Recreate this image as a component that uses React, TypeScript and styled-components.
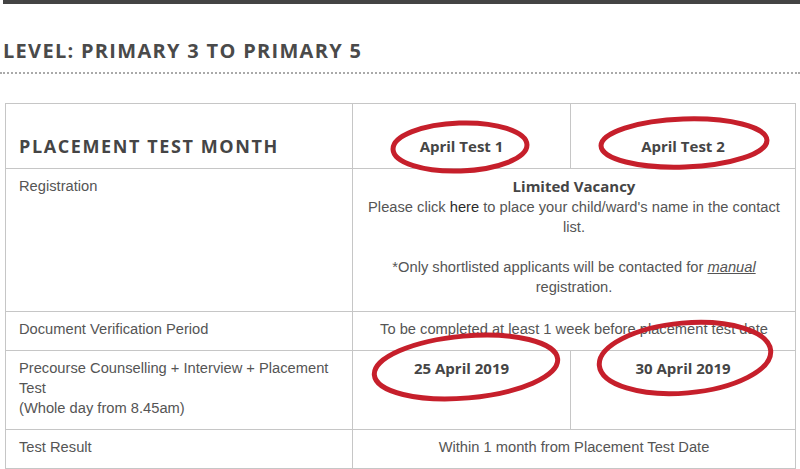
import styled, { createGlobalStyle } from "styled-components";

const GlobalStyle = createGlobalStyle`
  html, body {
    margin: 0;
    padding: 0;
    background: #fff;
  }
  body {
    font-family: "Liberation Sans", Arial, sans-serif;
    color: #555;
    overflow: hidden;
  }
`;

const marks = [
  { cx: 460, cy: 147, rx: 67, ry: 24, tilt: -2 },
  { cx: 684, cy: 143, rx: 83, ry: 24, tilt: -2 },
  { cx: 466, cy: 367, rx: 92, ry: 31, tilt: -5 },
  { cx: 685, cy: 358, rx: 86, ry: 35, tilt: -5 },
];

const App = () => {
  return (
    <Page>
      <GlobalStyle />
      <TopBar />
      <Heading>Level: Primary 3 to Primary 5</Heading>
      <Divider />
      <Schedule>
        <colgroup>
          <col style={{ width: 347 }} />
          <col style={{ width: 218 }} />
          <col style={{ width: 225 }} />
        </colgroup>
        <tbody>
          <HeadRow>
            <HeadCell>Placement Test Month</HeadCell>
            <MonthCell>April Test 1</MonthCell>
            <MonthCell>April Test 2</MonthCell>
          </HeadRow>
          <tr>
            <Cell $tall>Registration</Cell>
            <Cell $center $tall colSpan={2}>
              <Strong>Limited Vacancy</Strong>
              <br />
              Please click <Link>here</Link> to place your child/ward's name in
              the contact list.
              <br />
              <br />
              *Only shortlisted applicants will be contacted for{" "}
              <Note>manual</Note> registration.
            </Cell>
          </tr>
          <tr>
            <Cell>Document Verification Period</Cell>
            <Cell $center colSpan={2}>
              To be completed at least 1 week before placement test date
            </Cell>
          </tr>
          <tr>
            <Cell>
              Precourse Counselling + Interview + Placement Test
              <br />
              (Whole day from 8.45am)
            </Cell>
            <DateCell>25 April 2019</DateCell>
            <DateCell>30 April 2019</DateCell>
          </tr>
          <tr>
            <Cell>Test Result</Cell>
            <Cell $center colSpan={2}>
              Within 1 month from Placement Test Date
            </Cell>
          </tr>
        </tbody>
      </Schedule>
      <Marks viewBox="0 0 800 469" width={800} height={469}>
        {marks.map((m, i) => (
          <ellipse
            key={i}
            cx={m.cx}
            cy={m.cy}
            rx={m.rx}
            ry={m.ry}
            transform={`rotate(${m.tilt} ${m.cx} ${m.cy})`}
          />
        ))}
      </Marks>
    </Page>
  );
};

const Page = styled.div`
  position: relative;
  width: 800px;
  height: 469px;
  overflow: hidden;
`;

const TopBar = styled.div`
  height: 4px;
  margin-left: 3px;
  background: #444;
`;

const Heading = styled.h2`
  margin: 35px 0 0;
  padding-left: 3px;
  font-family: "Open Sans", sans-serif;
  font-weight: 700;
  font-size: 20px;
  line-height: 24px;
  letter-spacing: 1.3px;
  text-transform: uppercase;
  color: #4a4a4a;
`;

const Divider = styled.div`
  margin-top: 9px;
  border-bottom: 2px dotted #aaa;
`;

const Schedule = styled.table`
  margin: 29px 0 0 5px;
  width: 790px;
  table-layout: fixed;
  border-collapse: collapse;
  font-size: 14.7px;
  line-height: 20px;

  td {
    border: 1px solid #c6c6c6;
  }
`;

const HeadRow = styled.tr`
  td {
    vertical-align: bottom;
    padding: 30px 13px 10px;
    line-height: 24px;
    font-family: "Open Sans", sans-serif;
    font-weight: 700;
    color: #454545;
  }
`;

const HeadCell = styled.td`
  font-size: 18px;
  letter-spacing: 1.6px;
  text-transform: uppercase;
`;

const MonthCell = styled.td`
  font-size: 15px;
  text-align: center;
`;

const Cell = styled.td<{ $center?: boolean; $tall?: boolean }>`
  vertical-align: top;
  padding: 7px 13px ${(p) => (p.$tall ? "14px" : "11px")};
  text-align: ${(p) => (p.$center ? "center" : "left")};
`;

const DateCell = styled(Cell)`
  text-align: center;
  font-family: "Open Sans", sans-serif;
  font-weight: 700;
  font-size: 15px;
  color: #454545;
`;

const Strong = styled.strong`
  font-family: "Open Sans", sans-serif;
  font-size: 15px;
  color: #454545;
`;

const Link = styled.span`
  color: #2b2b2b;
`;

const Note = styled.em`
  text-decoration: underline;
`;

const Marks = styled.svg`
  position: absolute;
  top: 0;
  left: 0;
  pointer-events: none;

  ellipse {
    fill: none;
    stroke: #c61f2b;
    stroke-width: 5;
  }
`;

export default App;
